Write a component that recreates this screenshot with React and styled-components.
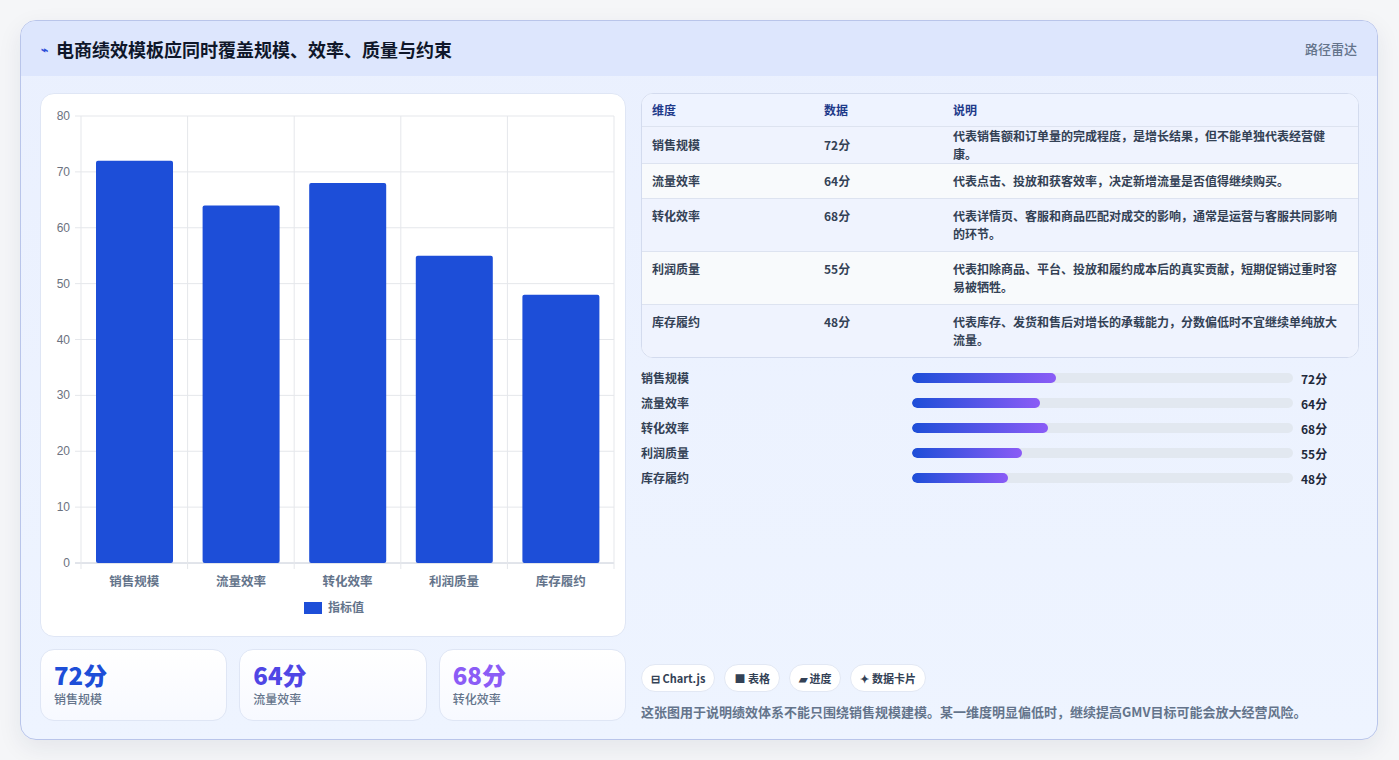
import React from "react";
import styled, { createGlobalStyle } from "styled-components";

const G = createGlobalStyle`
  html,body{margin:0;padding:0;background:#f5f6f8;}
  body{font-family:"Noto Sans CJK SC","Noto Sans",sans-serif;}
  *{box-sizing:border-box;}
`;
const Page = styled.div`padding:20px 21px 20px 20px;`;
const Card = styled.div`
  height:720px;border:1px solid #b9c5ea;border-radius:16px;overflow:hidden;
  background:linear-gradient(180deg,#eaf0fe,#eef4ff);
  box-shadow:0 8px 24px rgba(30,41,80,.08);display:flex;flex-direction:column;
`;
const Header = styled.div`
  height:55px;flex:none;background:#dde6fd;display:flex;align-items:center;justify-content:space-between;padding:0 20px 0 20px;
`;
const Title = styled.div`display:flex;align-items:center;gap:8px;font-size:18px;font-weight:700;color:#0f172a;`;
const Icon = styled.span`color:#2d4fd8;font-size:12px;`;
const Side = styled.div`font-size:13px;color:#64748b;font-weight:500;`;
const Body = styled.div`flex:1;display:grid;grid-template-columns:586px 1fr;gap:15px;padding:17px 18px 18px 19px;`;
const Col = styled.div`display:flex;flex-direction:column;gap:12px;min-height:0;`;
const ChartCard = styled.div`height:544px;background:#fff;border:1px solid #dfe6f5;border-radius:14px;`;
const Kpis = styled.div`display:grid;grid-template-columns:repeat(3,1fr);gap:12px;`;
const Kpi = styled.div`height:72px;border:1px solid #dfe6f5;border-radius:14px;background:linear-gradient(180deg,#fff,#f7f9ff);padding:10px 13px;`;
const KpiVal = styled.div`font-size:24px;font-weight:800;color:${p=>p.c};line-height:30px;`;
const KpiLab = styled.div`font-size:12px;color:#64748b;font-weight:500;`;
const Table = styled.div`border:1px solid #d3dbee;border-radius:12px;overflow:hidden;background:#fff;`;
const Row = styled.div`
  display:grid;grid-template-columns:172px 129px 1fr;padding:0 10px;border-top:${p=>p.head?"none":"1px solid #dde3f0"};
  background:${p=>p.head?"#eef3ff":p.alt?"#f8fafc":"#eff3fe"};
  min-height:${p=>p.head?32:35}px;align-items:${p=>p.tall?"start":"center"};padding-top:${p=>p.tall?8:0}px;padding-bottom:${p=>p.tall?8:0}px;
  font-size:12px;font-weight:${p=>p.head?700:600};color:${p=>p.head?"#1e3a8a":"#334155"};line-height:18px;
`;
const Bars = styled.div`display:grid;grid-template-columns:263px 1fr auto;column-gap:8px;row-gap:7px;margin-top:11px;align-items:center;width:690px;`;
const BLab = styled.div`font-size:12px;color:#334155;font-weight:600;line-height:18px;`;
const Track = styled.div`height:10px;border-radius:5px;background:#e2e8f0;overflow:hidden;`;
const Fill = styled.div`height:100%;border-radius:5px;background:linear-gradient(90deg,#1d4ed8,#8b5cf6);`;
const BVal = styled.div`font-size:12px;font-weight:700;color:#1e293b;width:30px;`;
const Spacer = styled.div`flex:1;`;
const Tags = styled.div`display:flex;gap:9px;`;
const Tag = styled.div`height:28px;padding:0 9px;border-radius:14px;background:#fff;border:1px solid #e2e8f4;display:flex;align-items:center;font-size:11px;font-weight:700;color:#334155;`;
const Note = styled.div`font-size:13px;color:#64748b;font-weight:600;margin-top:-1px;`;

const data=[["销售规模",72,"代表销售额和订单量的完成程度，是增长结果，但不能单独代表经营健康。"],["流量效率",64,"代表点击、投放和获客效率，决定新增流量是否值得继续购买。"],["转化效率",68,"代表详情页、客服和商品匹配对成交的影响，通常是运营与客服共同影响的环节。"],["利润质量",55,"代表扣除商品、平台、投放和履约成本后的真实贡献，短期促销过重时容易被牺牲。"],["库存履约",48,"代表库存、发货和售后对增长的承载能力，分数偏低时不宜继续单纯放大流量。"]];

function Chart(){
  const x0=40,x1=573,y0=22,y1=469,step=(x1-x0)/5;
  const y=v=>y1-(v/80)*(y1-y0);
  return <svg width="586" height="544" style={{display:"block"}}>
    {[0,10,20,30,40,50,60,70,80].map(v=><g key={v}>
      <line x1={x0-6} x2={x1} y1={y(v)} y2={y(v)} stroke={v===0?"#c4cad6":"#e5e7eb"}/>
      <text x={x0-11} y={y(v)+4} textAnchor="end" fontSize="12" fill="#6b7280" fontFamily="Liberation Sans,sans-serif">{v}</text></g>)}
    {[0,1,2,3,4,5].map(i=><line key={i} x1={x0+i*step} x2={x0+i*step} y1={y0} y2={y1+6} stroke="#e5e7eb"/>)}
    {data.map((d,i)=><g key={i}>
      <rect x={x0+i*step+15} y={y(d[1])} width={77} height={y1-y(d[1])} fill="#1d4ed8" rx="2"/>
      <text x={x0+i*step+step/2} y={492} textAnchor="middle" fontSize="12.5" fill="#64748b" fontWeight="600">{d[0]}</text></g>)}
    <rect x="263" y="508" width="18" height="12" fill="#1d4ed8"/>
    <text x="287" y="518" fontSize="12" fill="#64748b" fontWeight="600">指标值</text>
  </svg>;
}

export default function App(){
  return <><G/><Page><Card>
    <Header><Title><Icon>⌁</Icon>电商绩效模板应同时覆盖规模、效率、质量与约束</Title><Side>路径雷达</Side></Header>
    <Body>
      <Col>
        <ChartCard><Chart/></ChartCard>
        <Kpis>
          <Kpi><KpiVal c="#1d4ed8">72分</KpiVal><KpiLab>销售规模</KpiLab></Kpi>
          <Kpi><KpiVal c="#4f46e5">64分</KpiVal><KpiLab>流量效率</KpiLab></Kpi>
          <Kpi><KpiVal c="#8b5cf6">68分</KpiVal><KpiLab>转化效率</KpiLab></Kpi>
        </Kpis>
      </Col>
      <Col style={{gap:0}}>
        <Table>
          <Row head><div>维度</div><div>数据</div><div>说明</div></Row>
          {data.map((d,i)=><Row key={i} alt={i%2===1} tall={i>=2}><div>{d[0]}</div><div>{d[1]}分</div><div>{d[2]}</div></Row>)}
        </Table>
        <Bars>
          {data.map((d,i)=><React.Fragment key={i}><BLab>{d[0]}</BLab><Track><Fill style={{width:`${d[1]*0.525}%`}}/></Track><BVal>{d[1]}分</BVal></React.Fragment>)}
        </Bars>
        <Spacer/>
        <Tags><Tag>⊟ Chart.js</Tag><Tag>■ 表格</Tag><Tag>▰ 进度</Tag><Tag>✦ 数据卡片</Tag></Tags>
        <Note style={{marginTop:10}}>这张图用于说明绩效体系不能只围绕销售规模建模。某一维度明显偏低时，继续提高GMV目标可能会放大经营风险。</Note>
      </Col>
    </Body>
  </Card></Page></>;
}
